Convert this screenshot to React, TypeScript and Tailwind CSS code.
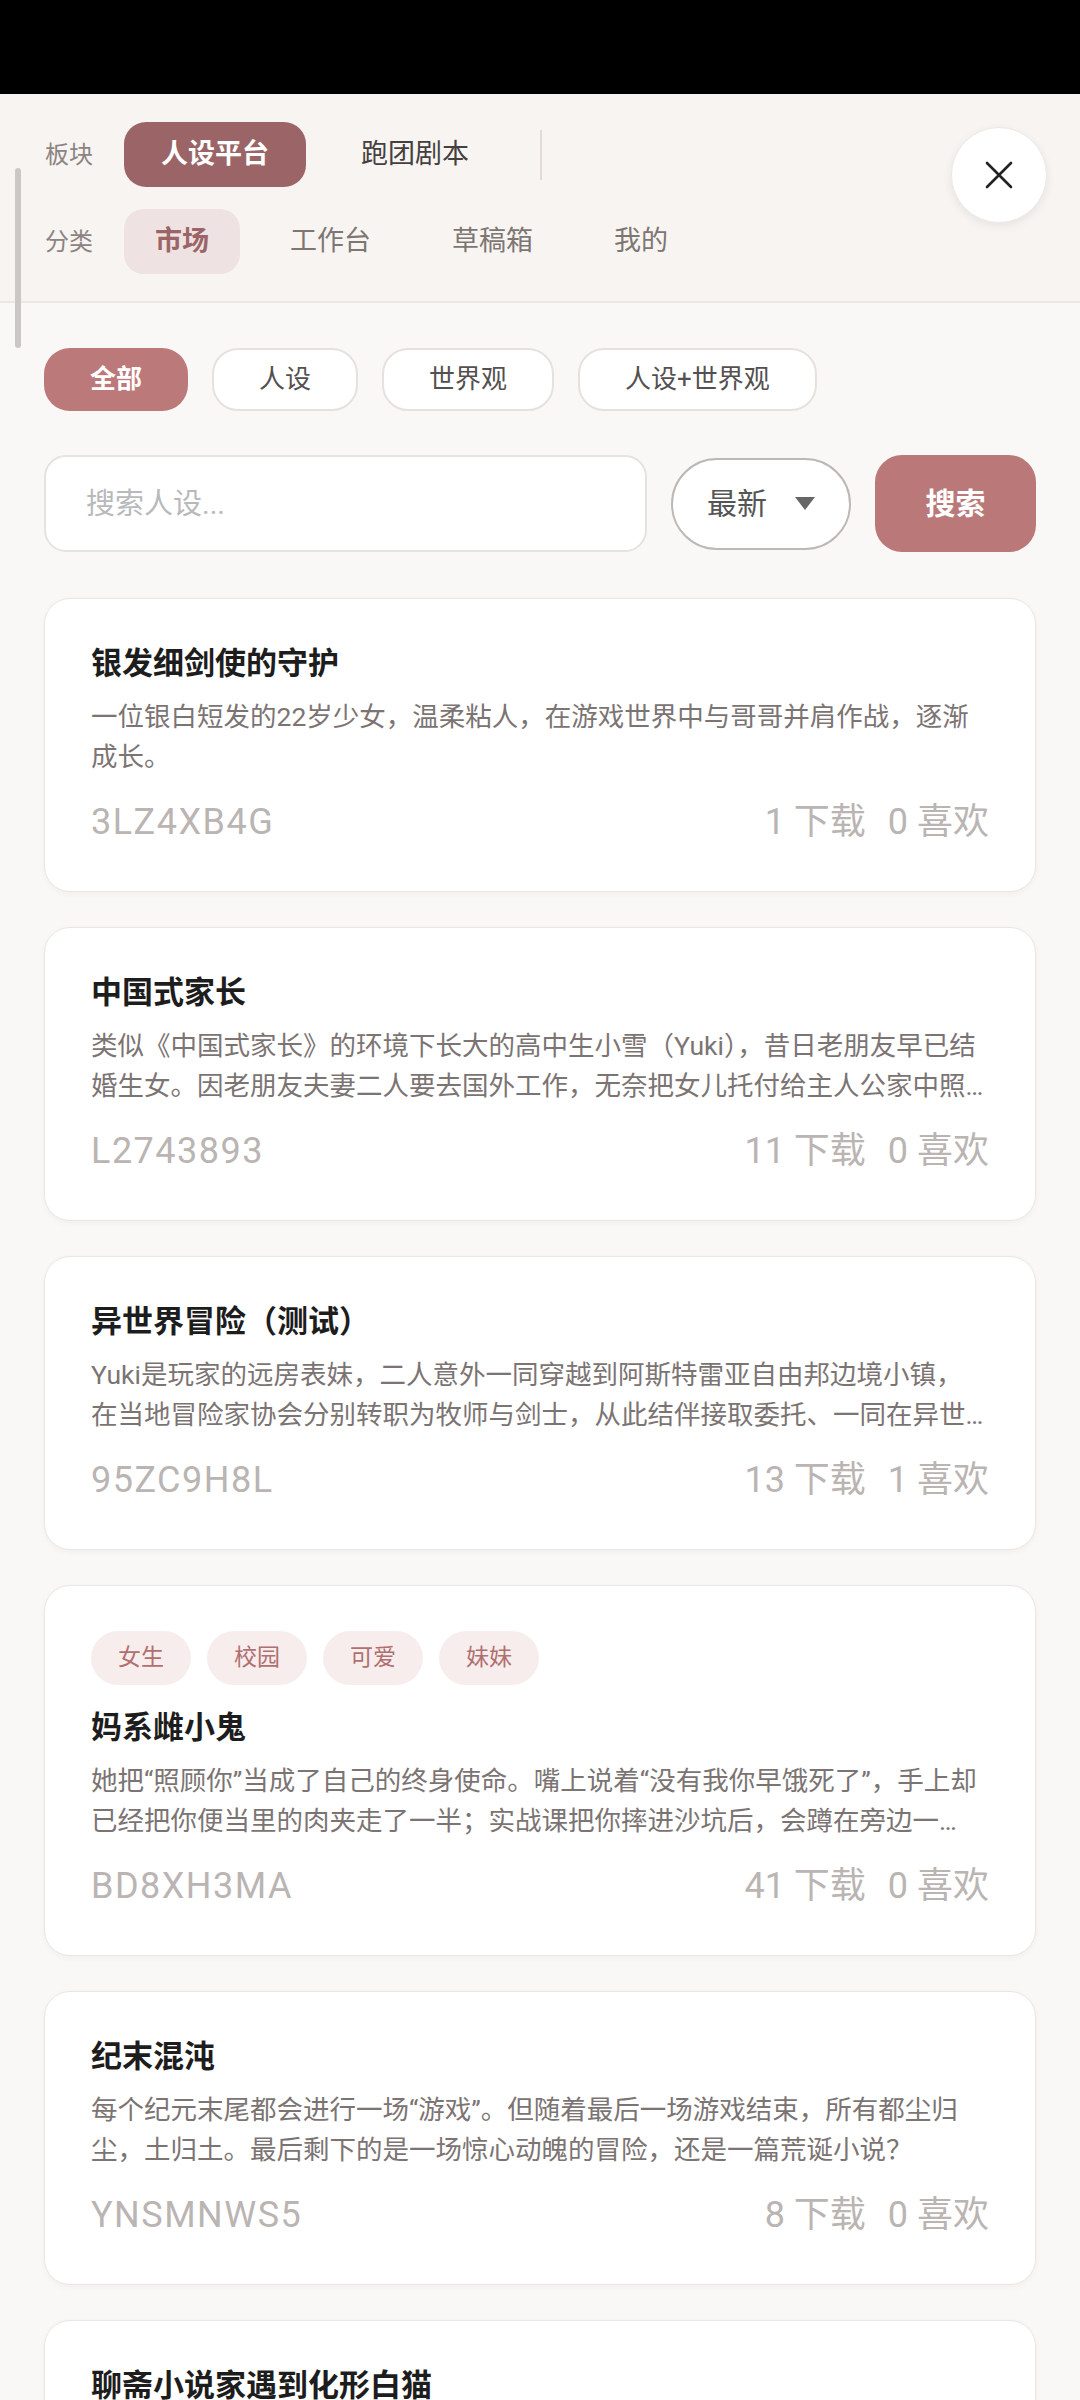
import React, { useState } from 'react';

interface CharacterCard {
  id: string;
  title: string;
  tags?: string[];
  lines: string[];
  code: string;
  downloads: number;
  likes: number;
}

const cards: CharacterCard[] = [
  {
    id: '1',
    title: '银发细剑使的守护',
    lines: ['一位银白短发的22岁少女，温柔粘人，在游戏世界中与哥哥并肩作战，逐渐', '成长。'],
    code: '3LZ4XB4G',
    downloads: 1,
    likes: 0
  },
  {
    id: '2',
    title: '中国式家长',
    lines: [
      '类似《中国式家长》的环境下长大的高中生小雪（Yuki），昔日老朋友早已结',
      '婚生女。因老朋友夫妻二人要去国外工作，无奈把女儿托付给主人公家中照…'
    ],
    code: 'L2743893',
    downloads: 11,
    likes: 0
  },
  {
    id: '3',
    title: '异世界冒险（测试）',
    lines: [
      'Yuki是玩家的远房表妹，二人意外一同穿越到阿斯特雷亚自由邦边境小镇，',
      '在当地冒险家协会分别转职为牧师与剑士，从此结伴接取委托、一同在异世…'
    ],
    code: '95ZC9H8L',
    downloads: 13,
    likes: 1
  },
  {
    id: '4',
    title: '妈系雌小鬼',
    tags: ['女生', '校园', '可爱', '妹妹'],
    lines: [
      '她把“照顾你”当成了自己的终身使命。嘴上说着“没有我你早饿死了”，手上却',
      '已经把你便当里的肉夹走了一半；实战课把你摔进沙坑后，会蹲在旁边一…'
    ],
    code: 'BD8XH3MA',
    downloads: 41,
    likes: 0
  },
  {
    id: '5',
    title: '纪末混沌',
    lines: [
      '每个纪元末尾都会进行一场“游戏”。但随着最后一场游戏结束，所有都尘归',
      '尘，土归土。最后剩下的是一场惊心动魄的冒险，还是一篇荒诞小说？'
    ],
    code: 'YNSMNWS5',
    downloads: 8,
    likes: 0
  },
  {
    id: '6',
    title: '聊斋小说家遇到化形白猫',
    lines: [
      '落魄的聊斋小说家在破庙里收留了一只受伤的白猫，某天夜里白猫化作少女，',
      '自称要报恩，却总是把他的书稿弄得一团糟…'
    ],
    code: 'K7QW2M9P',
    downloads: 5,
    likes: 0
  }
];

const sections = ['人设平台', '跑团剧本'];
const categories = ['市场', '工作台', '草稿箱', '我的'];
const filters = ['全部', '人设', '世界观', '人设+世界观'];

const Card: React.FC<{ card: CharacterCard }> = ({ card }) => (
  <div className="rounded-[26px] border border-[#ebe6e3] bg-white px-[46px] pt-[45px] pb-[47px] shadow-[0_2px_6px_rgba(0,0,0,0.04)]">
    {card.tags && (
      <div className="mb-[23px] flex gap-[16px]">
        {card.tags.map((tag) => (
          <span
            key={tag}
            className="flex h-[54px] items-center rounded-full bg-[#f7eded] px-[27px] text-[23px] text-[#b06f70]"
          >
            {tag}
          </span>
        ))}
      </div>
    )}
    <h3 className="text-[31px] font-bold leading-[40px] text-[#1d1d1d]">{card.title}</h3>
    <div className="mt-[13px] text-[26.5px] leading-[40px] text-[#7b7473]">
      {card.lines.map((line, i) => (
        <div key={i} className="whitespace-nowrap">
          {line}
        </div>
      ))}
    </div>
    <div className="mt-[23px] flex items-center justify-between text-[36px] leading-[44px] text-[#bab4b3]">
      <span className="tracking-[1.5px]">{card.code}</span>
      <div className="flex gap-[22px]">
        <span>{card.downloads} 下载</span>
        <span>{card.likes} 喜欢</span>
      </div>
    </div>
  </div>
);

const App: React.FC = () => {
  const [section, setSection] = useState('人设平台');
  const [category, setCategory] = useState('市场');
  const [filter, setFilter] = useState('全部');
  const [query, setQuery] = useState('');

  return (
    <div className="relative min-h-[2400px] w-[1080px] bg-[#faf8f6] font-['Roboto','Noto_Sans_CJK_SC',sans-serif]">
      <div className="h-[94px] bg-black" />

      {/* Header */}
      <div className="flex justify-between border-b-2 border-[#eee8e5] bg-[#f8f4f1] pt-[28px] pb-[27px] pl-[45px] pr-[33px]">
        <div className="flex flex-col gap-[22px]">
          <div className="flex items-center">
            <span className="mr-[31px] w-[48px] text-[24px] text-[#8b8482]">板块</span>
            <div className="flex gap-[18px]">
              {sections.map((s) => (
                <button
                  key={s}
                  onClick={() => setSection(s)}
                  className={
                    s === section
                      ? 'h-[65px] rounded-[22px] bg-[#9b6567] px-[37px] text-[27px] font-bold text-white'
                      : 'h-[65px] rounded-[22px] px-[37px] text-[27px] text-[#444040]'
                  }
                >
                  {s}
                </button>
              ))}
            </div>
            <div className="ml-[34px] h-[50px] w-[2px] bg-[#e2dcd9]" />
          </div>
          <div className="flex items-center">
            <span className="mr-[31px] w-[48px] text-[24px] text-[#8b8482]">分类</span>
            <div className="flex gap-[19px]">
              {categories.map((c) => (
                <button
                  key={c}
                  onClick={() => setCategory(c)}
                  className={
                    c === category
                      ? 'h-[65px] rounded-[20px] bg-[#efe2e2] px-[31px] text-[27px] font-bold text-[#9b6567]'
                      : 'h-[65px] rounded-[20px] px-[31px] text-[27px] text-[#7d7673]'
                  }
                >
                  {c}
                </button>
              ))}
            </div>
          </div>
        </div>
        <button className="mt-[5px] flex h-[96px] w-[96px] items-center justify-center rounded-full border border-[#ece8e6] bg-white shadow-[0_3px_10px_rgba(0,0,0,0.07)]">
          <svg width="28" height="28" viewBox="0 0 28 28" fill="none" stroke="#222" strokeWidth="2.6" strokeLinecap="round">
            <path d="M2 2L26 26M26 2L2 26" />
          </svg>
        </button>
      </div>

      {/* scroll indicator */}
      <div className="absolute left-[15px] top-[168px] h-[180px] w-[6px] rounded-full bg-[#cbc7c5]" />

      <div className="px-[44px]">
        {/* Filters */}
        <div className="mt-[45px] flex gap-[24px]">
          {filters.map((f) => (
            <button
              key={f}
              onClick={() => setFilter(f)}
              className={
                f === filter
                  ? 'h-[63px] rounded-[26px] bg-[#bc7979] px-[46px] text-[26px] font-bold text-white'
                  : 'h-[63px] rounded-[26px] border-2 border-[#e6e1df] bg-white px-[45px] text-[26px] text-[#555050]'
              }
            >
              {f}
            </button>
          ))}
        </div>

        {/* Search row */}
        <div className="mt-[44px] flex items-center gap-[24px]">
          <input
            value={query}
            onChange={(e) => setQuery(e.target.value)}
            placeholder="搜索人设..."
            className="h-[97px] w-[603px] rounded-[22px] border-2 border-[#e6e2df] bg-white pl-[40px] text-[29px] text-[#333] outline-none placeholder:text-[#b7b9bc]"
          />
          <button className="flex h-[92px] w-[180px] items-center justify-center gap-[28px] rounded-full border-2 border-[#bdb8b6] bg-white text-[30px] text-[#555]">
            <span>最新</span>
            <svg width="20" height="14" viewBox="0 0 20 14">
              <path d="M0 0H20L10 13Z" fill="#666" />
            </svg>
          </button>
          <button className="h-[97px] w-[161px] rounded-[27px] bg-[#bb7878] text-[30px] font-bold text-white">
            搜索
          </button>
        </div>

        {/* Cards */}
        <div className="mt-[46px] flex flex-col gap-[35px] pb-[40px]">
          {cards.map((card) => (
            <Card key={card.id} card={card} />
          ))}
        </div>
      </div>
    </div>
  );
};

export default App;
